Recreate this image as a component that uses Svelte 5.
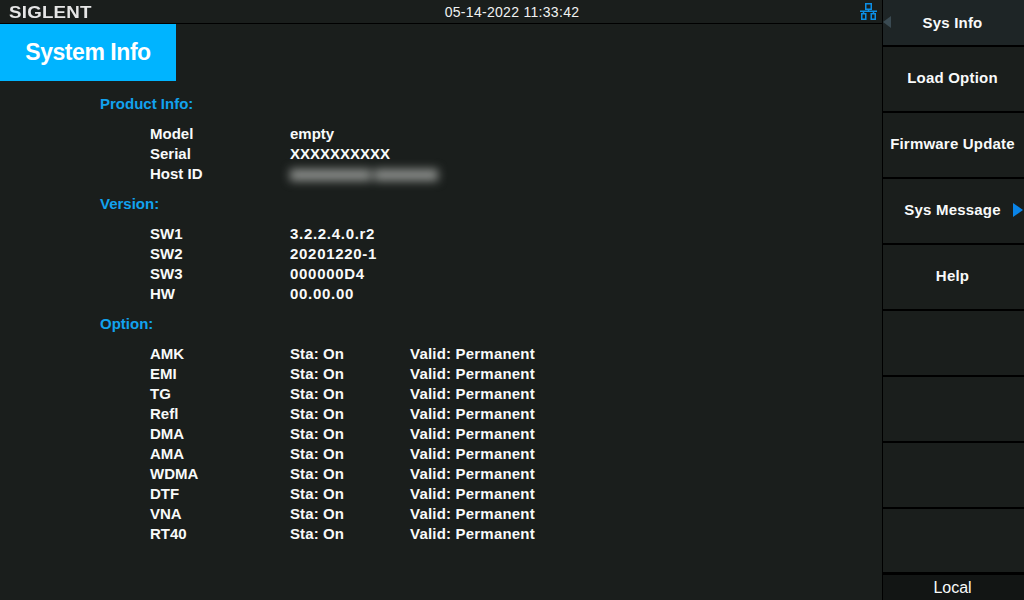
<script>
	const productInfo = [
		['Model', 'empty'],
		['Serial', 'XXXXXXXXXX'],
		['Host ID', '']
	];
	const version = [
		['SW1', '3.2.2.4.0.r2'],
		['SW2', '20201220-1'],
		['SW3', '000000D4'],
		['HW', '00.00.00']
	];
	const options = ['AMK', 'EMI', 'TG', 'Refl', 'DMA', 'AMA', 'WDMA', 'DTF', 'VNA', 'RT40'];
	const softkeys = ['Load Option', 'Firmware Update', 'Sys Message', 'Help', '', '', '', ''];
</script>

<div class="screen">
	<div class="main">
		<header class="topbar">
			<div class="logo">SIGLENT</div>
			<div class="clock">05-14-2022 11:33:42</div>
			<svg class="net" width="17" height="17" viewBox="0 0 17 17" fill="none" stroke="#0c8fe6" stroke-width="1.5">
				<rect x="5.75" y="0.75" width="5.5" height="5.5" />
				<path d="M8.5 6.25V8M0 8.25H17M3.5 8V11M13.5 8V11" />
				<rect x="1.75" y="10.75" width="4" height="5.5" />
				<rect x="11.25" y="10.75" width="4" height="5.5" />
			</svg>
		</header>

		<div class="title">System Info</div>

		<div class="content">
			<h2>Product Info:</h2>
			<div class="rows">
				{#each productInfo as [name, value]}
					<div class="row">
						<span class="name">{name}</span>
						{#if value}
							<span class="value">{value}</span>
						{:else}
							<span class="blur"><i></i><i></i></span>
						{/if}
					</div>
				{/each}
			</div>

			<h2>Version:</h2>
			<div class="rows">
				{#each version as [name, value]}
					<div class="row">
						<span class="name">{name}</span>
						<span class="value digits">{value}</span>
					</div>
				{/each}
			</div>

			<h2>Option:</h2>
			<div class="rows">
				{#each options as name}
					<div class="row">
						<span class="name">{name}</span>
						<span class="value sta">Sta: On</span>
						<span class="value valid">Valid: Permanent</span>
					</div>
				{/each}
			</div>
		</div>
	</div>

	<aside class="menu">
		<div class="key first">
			<span class="back"></span>
			Sys Info
		</div>
		{#each softkeys as label}
			<div class="key">
				{label}
				{#if label === 'Sys Message'}
					<span class="more"></span>
				{/if}
			</div>
		{/each}
		<div class="local">Local</div>
	</aside>
</div>

<style>
:global(body) { margin: 0; background: #1a1e1c; }

.screen {
	display: flex;
	width: 1024px;
	height: 600px;
	overflow: hidden;
	background: #1a1e1c;
	color: #f8fafa;
	font-family: "Liberation Sans", Arial, sans-serif;
	font-size: 15px;
	font-weight: 700;
}

.main { flex: 0 0 882px; width: 882px; }

.topbar {
	position: relative;
	display: flex;
	align-items: center;
	justify-content: center;
	height: 23px;
	border-bottom: 1px solid #000;
}
.logo {
	position: absolute;
	left: 9px;
	top: 3px;
	font-size: 16px;
	line-height: 19px;
	letter-spacing: 0.2px;
	color: #e6e6e6;
	transform: scaleX(1.17);
	transform-origin: left center;
}
.clock {
	font-size: 14px;
	font-weight: 400;
	letter-spacing: 0.3px;
	margin-left: 142px;
	color: #f0f2f2;
}
.net { position: absolute; left: 860px; top: 3px; }

.title {
	display: flex;
	align-items: center;
	justify-content: center;
	width: 176px;
	height: 57px;
	background: #00b4ff;
	color: #fff;
	font-size: 23px;
	letter-spacing: -0.45px;
}

.content { padding: 13px 0 0 100px; }
h2 {
	margin: 0;
	height: 20px;
	font-size: 15px;
	line-height: 20px;
	font-weight: 700;
	color: #12a2ee;
}
.rows { padding: 10px 0 10px 50px; }
.row { display: flex; height: 20px; line-height: 20px; }
.name { width: 140px; }
.sta { width: 120px; letter-spacing: 0.1px; }
.valid { letter-spacing: 0.2px; }
.digits { letter-spacing: 0.7px; }
.blur {
	display: flex;
	gap: 3px;
	width: 148px;
	height: 12px;
	margin-top: 5px;
	margin-left: 0;
	filter: blur(5px);
}
.blur i { flex: 1 1 62px; background: #8a8d8a; }
.blur i:first-child { flex-basis: 78px; }

.menu {
	display: flex;
	flex-direction: column;
	flex: 0 0 142px;
	box-sizing: border-box;
	width: 142px;
	border-left: 1px solid #000;
	letter-spacing: 0.2px;
}
.key {
	position: relative;
	box-sizing: border-box;
	flex: 0 0 66px;
	display: flex;
	align-items: center;
	justify-content: center;
	padding: 0 2px 4px 0;
	border-bottom: 2px solid #000;
}
.key.first { flex-basis: 47px; padding-bottom: 0; background: #1e2526; }
.key:nth-child(9) { border-bottom-width: 3px; }
.back {
	position: absolute;
	left: 0;
	top: 16px;
	border-style: solid;
	border-width: 6px 8px 6px 0;
	border-color: transparent #3a4a52 transparent transparent;
}
.more {
	position: absolute;
	right: 1px;
	top: 24px;
	border-style: solid;
	border-width: 7px 0 7px 10px;
	border-color: transparent transparent transparent #0a84e8;
}
.local {
	flex: 1;
	display: flex;
	align-items: center;
	justify-content: center;
	padding-right: 2px;
	background: #121514;
	font-size: 16px;
	font-weight: 400;
	letter-spacing: 0;
}
</style>
